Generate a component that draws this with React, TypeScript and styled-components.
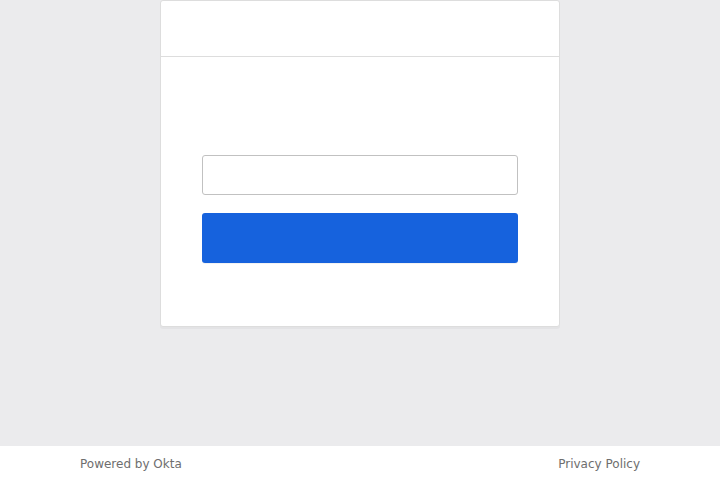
import React from "react";
import styled, { createGlobalStyle } from "styled-components";

const Global = createGlobalStyle`
  html, body { margin: 0; padding: 0; height: 100%; }
  body { background: #ebebed; font-family: "DejaVu Sans", "Noto Sans", sans-serif; }
  #root { min-height: 100%; }
`;

const Page = styled.div`
  display: flex;
  flex-direction: column;
  height: 480px;
`;

const Main = styled.main`
  flex: 0 0 446px;
  background: #ebebed;
  display: flex;
  justify-content: center;
  align-items: flex-start;
`;

const Card = styled.div`
  width: 400px;
  box-sizing: border-box;
  background: #fff;
  border: 1px solid #ddd;
  border-radius: 3px;
  box-shadow: 0 2px 0 rgba(175, 175, 175, 0.12);
`;

const CardHeader = styled.div`
  height: 55px;
  border-bottom: 1px solid #ddd;
`;

const CardBody = styled.div`
  padding: 98px 41px 63px;
  display: flex;
  flex-direction: column;
  gap: 18px;
`;

const Input = styled.input`
  box-sizing: border-box;
  height: 40px;
  width: 100%;
  border: 1px solid #c1c1c1;
  border-radius: 3px;
  background: #fff;
  outline: none;
`;

const Button = styled.button`
  box-sizing: border-box;
  height: 50px;
  width: 100%;
  border: none;
  border-radius: 3px;
  background: #1662dd;
  box-shadow: 0 1px 0 rgba(0, 0, 0, 0.05);
`;

const Footer = styled.footer`
  flex: 1;
  background: #fff;
  display: flex;
  justify-content: space-between;
  align-items: center;
  padding: 2px 80px 0;
`;

const FooterLink = styled.a`
  font-size: 12px;
  color: #6e6e6e;
  text-decoration: none;
`;

export default function App() {
  return (
    <>
      <Global />
      <Page>
        <Main>
          <Card>
            <CardHeader />
            <CardBody>
              <Input type="text" aria-label="input" />
              <Button type="button" aria-label="submit" />
            </CardBody>
          </Card>
        </Main>
        <Footer>
          <FooterLink href="#">Powered by Okta</FooterLink>
          <FooterLink href="#">Privacy Policy</FooterLink>
        </Footer>
      </Page>
    </>
  );
}
